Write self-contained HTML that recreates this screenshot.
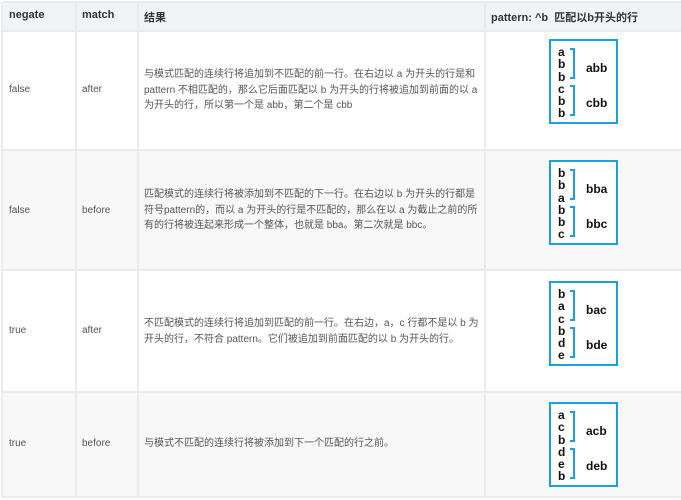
<!DOCTYPE html>
<html><head><meta charset="utf-8"><style>
*{margin:0;padding:0;box-sizing:border-box}
body{width:681px;height:500px;background:#fff;position:relative;overflow:hidden;font-family:"Liberation Sans","Noto Sans CJK SC",sans-serif;}
.r{position:absolute;left:2px;width:690px;border-top:2px solid #ebebeb}
.vl{position:absolute;top:2px;height:495px;width:2px;background:#ebebeb}
.t{position:absolute;font-size:10px;color:#555;line-height:15.5px;white-space:nowrap}
.h{position:absolute;font-size:11px;color:#333;font-weight:bold;top:9px}
.box{position:absolute;left:549px;width:69px;height:85px;border:2px solid #1a9fe0;background:#fff;font-family:"Liberation Sans",sans-serif;font-weight:bold;color:#111}
.box .l{position:absolute;left:7px;font-size:12px;line-height:12.3px;top:5px;width:10px}
.box .b{position:absolute;left:19px;width:5px;border:2.5px solid #1a9fe0;border-left:none}
.box .g{position:absolute;left:35px;font-size:12px}
</style></head><body>
<div style="position:absolute;left:2px;top:2px;width:690px;height:29px;background:#f1f3f5"></div>
<div style="position:absolute;left:2px;top:150px;width:690px;height:120px;background:#f8f8f8"></div>
<div style="position:absolute;left:2px;top:392px;width:690px;height:105px;background:#f8f8f8"></div>
<div class="r" style="top:1px"></div>
<div class="r" style="top:30px"></div>
<div class="r" style="top:149px"></div>
<div class="r" style="top:269px"></div>
<div class="r" style="top:391px"></div>
<div class="r" style="top:496px"></div>
<div class="vl" style="left:1px"></div>
<div class="vl" style="left:75px"></div>
<div class="vl" style="left:137px"></div>
<div class="vl" style="left:484px"></div>
<div class="h" style="left:9px">negate</div>
<div class="h" style="left:82px">match</div>
<div class="h" style="left:144px">结果</div>
<div class="h" style="left:491px">pattern: ^b&nbsp; 匹配以b开头的行</div>

<div class="t" style="left:9px;top:82px">false</div>
<div class="t" style="left:82px;top:82px">after</div>
<div class="t" style="left:144px;top:67px">与模式匹配的连续行将追加到不匹配的前一行。在右边以 a 为开头的行是和<br>pattern 不相匹配的，那么它后面匹配以 b 为开头的行将被追加到前面的以 a<br>为开头的行，所以第一个是 abb，第二个是 cbb</div>

<div class="t" style="left:9px;top:203px">false</div>
<div class="t" style="left:82px;top:203px">before</div>
<div class="t" style="left:144px;top:187px">匹配模式的连续行将被添加到不匹配的下一行。在右边以 b 为开头的行都是<br>符号pattern的，而以 a 为开头的行是不匹配的，那么在以 a 为截止之前的所<br>有的行将被连起来形成一个整体，也就是 bba。第二次就是 bbc。</div>

<div class="t" style="left:9px;top:323px">true</div>
<div class="t" style="left:82px;top:323px">after</div>
<div class="t" style="left:144px;top:316px">不匹配模式的连续行将追加到匹配的前一行。在右边，a，c 行都不是以 b 为<br>开头的行，不符合 pattern。它们被追加到前面匹配的以 b 为开头的行。</div>

<div class="t" style="left:9px;top:436px">true</div>
<div class="t" style="left:82px;top:436px">before</div>
<div class="t" style="left:144px;top:436px">与模式不匹配的连续行将被添加到下一个匹配的行之前。</div>

<div class="box" style="top:39px"><div class="l">a<br>b<br>b<br>c<br>b<br>b</div><div class="b" style="top:7px;height:31px"></div><div class="b" style="top:44px;height:31px"></div><div class="g" style="top:20px">abb</div><div class="g" style="top:55px">cbb</div></div>
<div class="box" style="top:160px"><div class="l">b<br>b<br>a<br>b<br>b<br>c</div><div class="b" style="top:7px;height:31px"></div><div class="b" style="top:44px;height:31px"></div><div class="g" style="top:20px">bba</div><div class="g" style="top:55px">bbc</div></div>
<div class="box" style="top:281px"><div class="l">b<br>a<br>c<br>b<br>d<br>e</div><div class="b" style="top:7px;height:31px"></div><div class="b" style="top:44px;height:31px"></div><div class="g" style="top:20px">bac</div><div class="g" style="top:55px">bde</div></div>
<div class="box" style="top:402px"><div class="l">a<br>c<br>b<br>d<br>e<br>b</div><div class="b" style="top:7px;height:31px"></div><div class="b" style="top:44px;height:31px"></div><div class="g" style="top:20px">acb</div><div class="g" style="top:55px">deb</div></div>
</body></html>
